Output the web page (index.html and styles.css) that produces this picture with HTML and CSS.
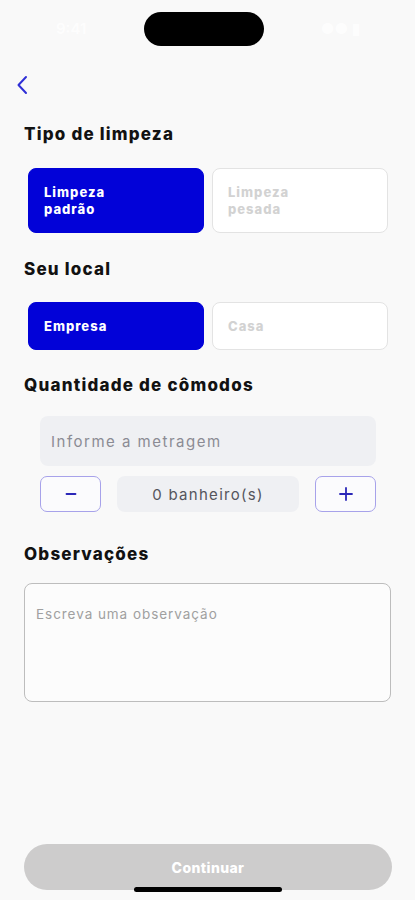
FILE: index.html
```html
<!DOCTYPE html>
<html lang="pt-BR">
<head>
<meta charset="utf-8">
<title>Tipo de limpeza</title>
<link rel="stylesheet" href="styles.css">
</head>
<body>
<div class="screen">
  <div class="status">
    <span class="time">9:41</span>
    <div class="island"></div>
    <span class="sys">●● ▮</span>
  </div>
  <div class="nav">
    <svg class="back" width="12" height="20" viewBox="0 0 12 20"><path d="M10 2 L2.5 10 L10 18" fill="none" stroke="#2f2fd6" stroke-width="2" stroke-linecap="round" stroke-linejoin="round"/></svg>
  </div>

  <main class="content">
    <h2 class="title t1">Tipo de limpeza</h2>
    <div class="options tall">
      <div class="option active">Limpeza<br>padrão</div>
      <div class="option">Limpeza<br>pesada</div>
    </div>

    <h2 class="title t2">Seu local</h2>
    <div class="options short">
      <div class="option active">Empresa</div>
      <div class="option">Casa</div>
    </div>

    <h2 class="title t3">Quantidade de cômodos</h2>
    <div class="rooms">
      <div class="input">Informe a metragem</div>
      <div class="stepper">
        <div class="step-btn"><svg width="12" height="12" viewBox="0 0 12 12"><path d="M1.5 6 H10.5" stroke="#2b27b8" stroke-width="1.8" stroke-linecap="round"/></svg></div>
        <div class="count">0 banheiro(s)</div>
        <div class="step-btn"><svg width="14" height="14" viewBox="0 0 14 14"><path d="M1 7 H13 M7 1 V13" stroke="#2b27b8" stroke-width="1.8" stroke-linecap="round"/></svg></div>
      </div>
    </div>

    <h2 class="title t4">Observações</h2>
    <div class="textarea">Escreva uma observação</div>
  </main>

  <footer class="footer">
    <div class="continue">Continuar</div>
  </footer>
  <div class="home-indicator"></div>
</div>
</body>
</html>
```

FILE: styles.css
```css
* { box-sizing: border-box; }
html, body { margin: 0; padding: 0; }
body {
  background: #f9f9f9;
  font-family: Inter, "Open Sans", sans-serif;
  color: #111;
}
.screen {
  position: relative;
  height: 900px;
  display: flex;
  flex-direction: column;
}
.status {
  height: 58px;
  padding-top: 12px;
  display: flex;
  justify-content: space-between;
  align-items: flex-start;
  padding-left: 56px;
  padding-right: 55px;
}
.time, .sys {
  color: #ffffff;
  opacity: 0.8;
  font-size: 15px;
  font-weight: 600;
  line-height: 34px;
}
.island {
  width: 120px;
  height: 34px;
  background: #000;
  border-radius: 17px;
}
.nav {
  height: 53px;
  display: flex;
  align-items: center;
  padding-left: 16px;
}
.content {
  padding: 0 24px;
  display: flex;
  flex-direction: column;
}
.title {
  margin: 0;
  font-size: 17px;
  line-height: 22px;
  font-weight: 800;
  color: #121212;
  letter-spacing: 1.2px;
}
.t1 { margin-top: 12px; }
.t2 { margin-top: 25px; }
.t3 { margin-top: 24px; }
.t4 { margin-top: 31px; }
.options {
  display: flex;
  gap: 8px;
  padding: 0 3px 0 4px;
  margin-top: 23px;
}
.options.short { margin-top: 22px; }
.option {
  flex: 1;
  height: 65px;
  border-radius: 8px;
  background: #ffffff;
  border: 1px solid #e3e3e3;
  display: flex;
  align-items: center;
  padding-left: 15px;
  padding-top: 1px;
  font-size: 13px;
  line-height: 17.5px;
  font-weight: 800;
  color: #d2d2d2;
  letter-spacing: 1px;
}
.short .option { height: 48px; }
.option.active {
  background: #0202d8;
  border-color: #0202d8;
  color: #ffffff;
}
.rooms {
  margin-top: 20px;
  padding: 0 15px 0 16px;
  display: flex;
  flex-direction: column;
  gap: 10px;
}
.input {
  height: 50px;
  border-radius: 8px;
  background: #eff0f3;
  display: flex;
  align-items: center;
  padding-left: 11px;
  font-size: 15px;
  color: #8b8b94;
  letter-spacing: 1.5px;
}
.stepper {
  display: flex;
  justify-content: space-between;
  align-items: center;
  height: 36px;
}
.step-btn {
  width: 61px;
  height: 36px;
  border: 1.5px solid #a7a2ea;
  border-radius: 7px;
  display: flex;
  align-items: center;
  justify-content: center;
  background: #fbfbfd;
}
.count {
  width: 182px;
  height: 36px;
  border-radius: 8px;
  background: #eff0f3;
  display: flex;
  align-items: center;
  justify-content: center;
  font-size: 15px;
  color: #55555c;
  letter-spacing: 1.3px;
}
.textarea {
  margin-top: 18px;
  height: 119px;
  border: 1px solid #bdbdbd;
  border-radius: 8px;
  background: #fcfcfc;
  padding: 21px 11px;
  font-size: 13.5px;
  line-height: 18px;
  color: #a0a0a0;
  letter-spacing: 0.95px;
}
.footer {
  margin-top: auto;
  padding: 0 23px 10px 24px;
}
.continue {
  height: 46px;
  border-radius: 23px;
  background: #cdcccc;
  color: #ffffff;
  font-size: 14px;
  font-weight: 800;
  display: flex;
  align-items: center;
  justify-content: center;
  letter-spacing: 0.4px;
}
.home-indicator {
  position: absolute;
  left: 134px;
  top: 887px;
  width: 148px;
  height: 5px;
  border-radius: 3px;
  background: #000;
}
```
